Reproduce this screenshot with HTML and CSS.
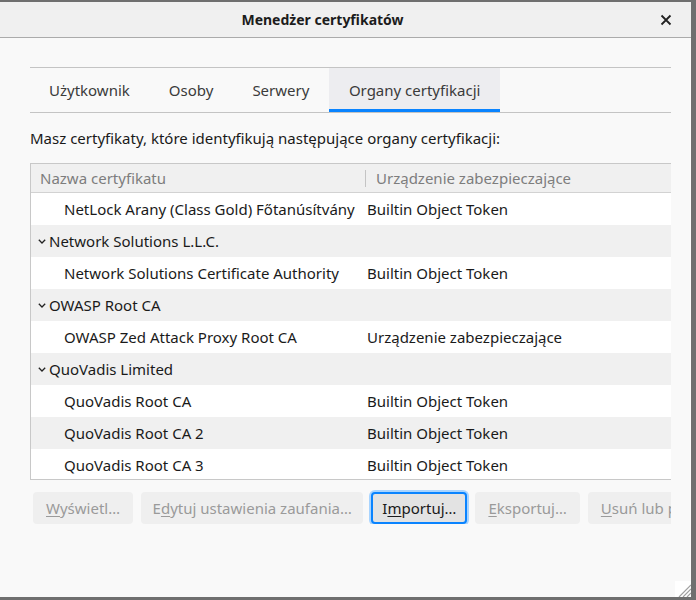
FILE: index.html
```html
<!DOCTYPE html>
<html lang="pl">
<head>
<meta charset="utf-8">
<link rel="stylesheet" href="styles.css">
</head>
<body>
<div class="window">
  <div class="titlebar">
    <div class="title">Menedżer certyfikatów</div>
    <svg class="close" width="12" height="12" viewBox="0 0 12 12"><path d="M1.5 1.5 L10.5 10.5 M10.5 1.5 L1.5 10.5" stroke="#222" stroke-width="1.8" fill="none"/></svg>
  </div>
  <div class="content">
    <div class="tabs">
      <div class="tab">Użytkownik</div>
      <div class="tab">Osoby</div>
      <div class="tab">Serwery</div>
      <div class="tab selected">Organy certyfikacji</div>
    </div>
    <p class="desc">Masz certyfikaty, które identyfikują następujące organy certyfikacji:</p>
    <div class="table">
      <div class="thead">
        <div class="th c1">Nazwa certyfikatu</div>
        <div class="th c2">Urządzenie zabezpieczające</div>
      </div>
      <div class="tbody">
        <div class="row child"><div class="c1">NetLock Arany (Class Gold) Főtanúsítvány</div><div class="c2">Builtin Object Token</div></div>
        <div class="row group"><div class="c1"><svg class="chev" width="8" height="5" viewBox="0 0 8 5"><path d="M0.8 0.8 L4 4 L7.2 0.8" stroke="#222" stroke-width="1.3" fill="none"/></svg>Network Solutions L.L.C.</div><div class="c2"></div></div>
        <div class="row child"><div class="c1">Network Solutions Certificate Authority</div><div class="c2">Builtin Object Token</div></div>
        <div class="row group"><div class="c1"><svg class="chev" width="8" height="5" viewBox="0 0 8 5"><path d="M0.8 0.8 L4 4 L7.2 0.8" stroke="#222" stroke-width="1.3" fill="none"/></svg>OWASP Root CA</div><div class="c2"></div></div>
        <div class="row child"><div class="c1">OWASP Zed Attack Proxy Root CA</div><div class="c2">Urządzenie zabezpieczające</div></div>
        <div class="row group"><div class="c1"><svg class="chev" width="8" height="5" viewBox="0 0 8 5"><path d="M0.8 0.8 L4 4 L7.2 0.8" stroke="#222" stroke-width="1.3" fill="none"/></svg>QuoVadis Limited</div><div class="c2"></div></div>
        <div class="row child"><div class="c1">QuoVadis Root CA</div><div class="c2">Builtin Object Token</div></div>
        <div class="row child"><div class="c1">QuoVadis Root CA 2</div><div class="c2">Builtin Object Token</div></div>
        <div class="row child"><div class="c1">QuoVadis Root CA 3</div><div class="c2">Builtin Object Token</div></div>
      </div>
    </div>
    <div class="buttons">
      <div class="btn disabled"><u>W</u>yświetl…</div>
      <div class="btn disabled wide">E<u>d</u>ytuj ustawienia zaufania…</div>
      <div class="btn focused">I<u>m</u>portuj…</div>
      <div class="btn disabled"><u>E</u>ksportuj…</div>
      <div class="btn disabled"><u>U</u>suń lub p</div>
    </div>
  </div>
  <svg class="grip" width="16" height="16" viewBox="0 0 16 16">
    <rect width="16" height="16" fill="#ffffff"/>
    <path d="M16 4 L4 16 M16 8 L8 16 M16 12 L12 16" stroke="#a0a0a0" stroke-width="1.2"/>
  </svg>
</div>
</body>
</html>
```

FILE: styles.css
```css
html, body {
  margin: 0;
  padding: 0;
}
body {
  background: #6f6f6f;
  width: 696px;
  height: 600px;
  overflow: hidden;
  font-family: "Noto Sans", "DejaVu Sans", sans-serif;
  font-size: 15px;
  color: #1a1a1a;
}
.window {
  position: relative;
  margin-top: 2px;
  width: 691px;
  height: 595px;
  background: #f9f9f9;
  overflow: hidden;
}
.titlebar {
  position: relative;
  height: 35px;
  background: #f0f0f0;
  border-bottom: 1px solid #ababab;
  display: flex;
  align-items: center;
  justify-content: center;
}
.title {
  font-weight: bold;
  font-size: 14px;
  color: #1c1c1c;
  margin-left: -46px;
}
.close {
  position: absolute;
  right: 19px;
  top: 12px;
}
.content {
  margin-left: 30px;
  width: 641px;
  overflow: hidden;
  padding-top: 29px;
}
.tabs {
  display: flex;
  border-top: 1px solid #c4c4c4;
  border-bottom: 1px solid #c4c4c4;
  height: 44px;
}
.tab {
  padding: 0 19.5px;
  display: flex;
  align-items: center;
  color: #3b3b3b;
  height: 44px;
  box-sizing: border-box;
}
.tab:first-child {
  padding-left: 19px;
}
.tab.selected {
  background: #ededf0;
  border-bottom: 3px solid #0a84ff;
  padding: 3px 20px 0;
}
.desc {
  margin: 0;
  height: 50px;
  display: flex;
  align-items: center;
  color: #1a1a1a;
}
.table {
  width: 660px;
  border: 1px solid #c8c8c8;
  border-right: none;
  background: #fff;
}
.thead {
  display: flex;
  height: 28px;
  background: #f0f0f0;
  border-bottom: 1px solid #d2d2d2;
  align-items: center;
  color: #7d7d7d;
}
.th.c1 {
  width: 325px;
  padding-left: 9px;
  box-sizing: content-box;
}
.th.c2 {
  border-left: 1px solid #c4c4c4;
  height: 17px;
  line-height: 17px;
  padding-left: 10px;
}
.tbody {
  height: 286px;
  overflow: hidden;
}
.row {
  display: flex;
  height: 32px;
  align-items: center;
}
.row:nth-child(even) {
  background: #f0f0f0;
}
.row .c1 {
  width: 336px;
  box-sizing: border-box;
  white-space: nowrap;
}
.row.child .c1 {
  padding-left: 33px;
}
.row.group .c1 {
  padding-left: 7px;
  display: flex;
  align-items: center;
}
.chev {
  margin-right: 3px;
  margin-top: 1px;
}
.buttons {
  display: flex;
  gap: 8px;
  margin-top: 12px;
  margin-left: 3px;
  white-space: nowrap;
}
.btn {
  height: 32px;
  box-sizing: border-box;
  display: flex;
  align-items: center;
  border-radius: 4px;
  padding: 0 13px;
  flex: none;
}
.btn.wide {
  padding: 0 11.5px;
}
.btn u {
  text-underline-offset: 2px;
}
.btn.disabled {
  background: #efefef;
  color: #9a9a9a;
}
.btn.focused {
  background: #e3e3e3;
  color: #1a1a1a;
  border: 2px solid #0a84ff;
  box-shadow: 0 0 0 2px #a8d4ff;
  padding: 0 9px;
}
.grip {
  position: absolute;
  right: 0;
  bottom: 0;
}
```
